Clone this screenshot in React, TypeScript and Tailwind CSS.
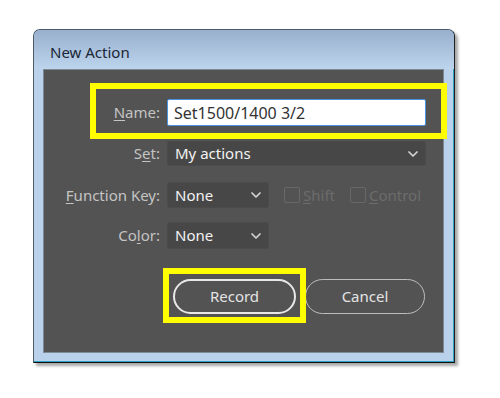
import React from "react";

const Chevron = () => (
  <svg width="10" height="6" viewBox="0 0 10 6" fill="none" stroke="#d4d4d4" strokeWidth="1.7" strokeLinecap="round" strokeLinejoin="round">
    <path d="M1 1l4 4 4-4" />
  </svg>
);

const Label: React.FC<{ children: React.ReactNode }> = ({ children }) => (
  <span className="w-[116px] shrink-0 text-right text-[15px] text-[#c4c4c4]">{children}</span>
);

const Select: React.FC<{ value: string; className: string }> = ({ value, className }) => (
  <div className={`ml-[7px] flex items-center justify-between rounded-[3px] border border-[#4b4b4b] bg-[#474747] pl-[7px] pr-[7px] text-[15px] text-[#f2f2f2] ${className}`}>
    <span>{value}</span>
    <Chevron />
  </div>
);

const Check: React.FC<{ u: string; rest: string; className?: string }> = ({ u, rest, className }) => (
  <div className={`flex items-center text-[15px] text-[#6c6c6c] ${className ?? ""}`}>
    <span className="h-[16px] w-[16px] rounded-[2px] border border-[#686868]" />
    <span className="ml-[3px]">
      <span className="underline underline-offset-2">{u}</span>
      {rest}
    </span>
  </div>
);

export default function App() {
  return (
    <div className="h-[398px] w-[500px] bg-white font-['Noto_Sans','Open_Sans',sans-serif]">
      <div className="pl-[33px] pt-[29px]">
        {/* window frame */}
        <div className="flex h-[334px] w-[422px] flex-col rounded-t-[7px] border border-[#4e5a66] border-b-[#101010] border-r-[#202020] bg-[#b9d1ea] shadow-[3px_3px_3px_rgba(0,0,0,0.35),inset_0_-1px_0_#2aa3c4,inset_-1px_0_0_#2aa3c4]">
          <div className="h-[39px] shrink-0 rounded-t-[6px] bg-gradient-to-b from-[#98b0cd] to-[#bcd4ec] pl-[16px] pt-[11px] text-[15px] text-[#1c2636]">
            New Action
          </div>
          {/* content panel */}
          <div className="relative ml-[9px] mr-[10px] flex h-[284px] flex-col border border-[#7d8a96] bg-[#535353] pt-[29px]">
            <div className="flex h-[27px] items-center">
              <Label>
                <span className="underline underline-offset-2">N</span>ame:
              </Label>
              <div className="ml-[7px] flex h-[27px] w-[259px] items-center rounded-[2px] border border-[#4a93e0] bg-white pl-[6px] text-[16px] text-[#333]">
                Set1500/1400 3/2
              </div>
            </div>
            <div className="mt-[15px] flex h-[25px] items-center">
              <Label>
                S<span className="underline underline-offset-2">e</span>t:
              </Label>
              <Select value="My actions" className="h-[25px] w-[259px]" />
            </div>
            <div className="mt-[16px] flex h-[26px] items-center">
              <Label>
                <span className="underline underline-offset-2">F</span>unction Key:
              </Label>
              <Select value="None" className="h-[26px] w-[102px]" />
              <Check u="S" rest="hift" className="ml-[15px]" />
              <Check u="C" rest="ontrol" className="ml-[15px]" />
            </div>
            <div className="mt-[14px] flex h-[27px] items-center">
              <Label>
                Co<span className="underline underline-offset-2">l</span>or:
              </Label>
              <Select value="None" className="h-[27px] w-[102px]" />
            </div>
            <div className="mt-[30px] flex pl-[129px]">
              <button className="h-[35px] w-[123px] rounded-full border-2 border-[#e8e8e8] text-[15px] text-[#e4e4e4]">
                Record
              </button>
              <button className="ml-[9px] h-[35px] w-[120px] rounded-full border-[1.5px] border-[#bdbdbd] text-[15px] text-[#e4e4e4]">
                Cancel
              </button>
            </div>

            {/* highlight boxes */}
            <div className="pointer-events-none absolute left-[46px] top-[13px] h-[56px] w-[357px] border-[6px] border-[#ffff00]" />
            <div className="pointer-events-none absolute left-[119px] top-[198px] h-[55px] w-[143px] border-[6px] border-[#ffff00]" />
          </div>
        </div>
      </div>
    </div>
  );
}
